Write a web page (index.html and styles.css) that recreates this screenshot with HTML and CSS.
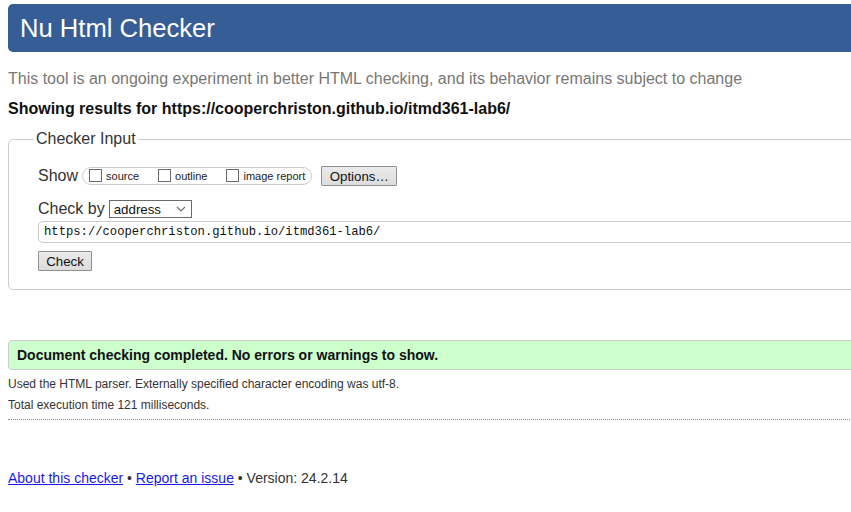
FILE: index.html
```html
<!DOCTYPE html>
<html lang="en">
<head>
<meta charset="utf-8">
<title>Nu Html Checker</title>
<link rel="stylesheet" href="styles.css">
</head>
<body>
<div class="page">
  <h1 class="title">Nu Html Checker</h1>
  <p class="intro">This tool is an ongoing experiment in better HTML checking, and its behavior remains subject to change</p>
  <p class="showing">Showing results for https://cooperchriston.github.io/itmd361-lab6/</p>

  <fieldset class="checker">
    <legend class="legend">Checker Input</legend>
    <div class="row show-row">
      <span class="label">Show</span>
      <span class="pill">
        <label class="opt"><input type="checkbox" class="cb">source</label>
        <label class="opt"><input type="checkbox" class="cb">outline</label>
        <label class="opt"><input type="checkbox" class="cb">image report</label>
      </span>
      <button class="btn btn-options" type="button">Options…</button>
    </div>
    <div class="row by-row">
      <span class="label">Check by</span>
      <span class="select">address
        <svg class="chev" width="10" height="6" viewBox="0 0 10 6"><path d="M1 1l4 4 4-4" fill="none" stroke="#6b6b6b" stroke-width="1.1"/></svg>
      </span>
    </div>
    <div class="url">https://cooperchriston.github.io/itmd361-lab6/</div>
    <div class="row">
      <button class="btn btn-check" type="button">Check</button>
    </div>
  </fieldset>

  <div class="success">Document checking completed. No errors or warnings to show.</div>
  <p class="details">Used the HTML parser. Externally specified character encoding was utf-8.</p>
  <p class="details">Total execution time 121 milliseconds.</p>
  <hr class="sep">

  <p class="footer"><a href="#" class="link">About this checker</a> • <a href="#" class="link">Report an issue</a> • Version: 24.2.14</p>
</div>
</body>
</html>
```
FILE: styles.css
```css
html, body {
  margin: 0;
  padding: 0;
  overflow: hidden;
  background: #fff;
}
body {
  font-family: "Liberation Sans", Arial, sans-serif;
  color: #222;
}
.page {
  width: 880px;
  padding: 4px 0 0 8px;
}
.title {
  margin: 0;
  height: 48px;
  box-sizing: border-box;
  background: #365d95;
  color: #fff;
  font-weight: normal;
  font-size: 25.6px;
  line-height: 48px;
  padding-left: 12px;
  border-radius: 5px;
}
.intro {
  margin: 17px 0 0;
  font-size: 16px;
  line-height: 20px;
  color: #777;
}
.showing {
  margin: 10px 0 0;
  font-size: 16px;
  line-height: 20px;
  font-weight: bold;
  color: #111;
}
.checker {
  margin: 11px 0 0;
  border: 1px solid #ccc;
  border-radius: 5px;
  padding: 17px 0 18px 29px;
  display: flex;
  flex-direction: column;
}
.legend {
  font-size: 16px;
  color: #333;
  padding: 0 2px;
  margin-left: -4px;
}
.row {
  display: flex;
  align-items: center;
}
.label {
  font-size: 16px;
  color: #333;
  margin-right: 4px;
}
.show-row {
  height: 22px;
}
.pill {
  display: flex;
  align-items: center;
  height: 18px;
  box-sizing: border-box;
  border: 1px solid #ccc;
  border-radius: 9px;
  padding: 0 6px 0 6px;
  margin-right: 9px;
}
.opt {
  display: flex;
  align-items: center;
  font-size: 11px;
  color: #222;
  margin-right: 19px;
}
.opt:last-child {
  margin-right: 0;
}
.cb {
  appearance: none;
  -webkit-appearance: none;
  width: 13px;
  height: 13px;
  margin: 0 4px 2px 0;
  border: 1px solid #6b6b6b;
  background: #fff;
  box-sizing: border-box;
}
.btn {
  font-family: "Liberation Sans", Arial, sans-serif;
  font-size: 13.3px;
  color: #111;
  background: linear-gradient(#eaeaea, #dcdcdc);
  border: 1px solid #8f8f8f;
  border-radius: 1px;
  height: 20px;
  padding: 0 7px;
  box-sizing: border-box;
}
.btn-options {
  width: 76px;
}
.btn-check {
  width: 54px;
  margin-top: 8px;
}
.by-row {
  margin-top: 12px;
  height: 20px;
}
.select {
  display: flex;
  align-items: center;
  justify-content: space-between;
  width: 83px;
  height: 18px;
  box-sizing: border-box;
  border: 1px solid #6b6b6b;
  padding: 0 5px 0 4px;
  font-size: 13.3px;
  color: #111;
}
.url {
  margin-top: 2px;
  height: 22px;
  box-sizing: border-box;
  border: 1px solid #ccc;
  border-radius: 5px;
  padding-left: 5px;
  font-family: "Liberation Mono", "DejaVu Sans Mono", monospace;
  font-size: 12.2px;
  line-height: 20px;
  color: #111;
}
.success {
  margin-top: 50px;
  height: 30px;
  box-sizing: border-box;
  background: #ccffcc;
  border: 1px solid #ccc;
  border-radius: 4px;
  padding-left: 8px;
  font-size: 14px;
  font-weight: bold;
  line-height: 28px;
  color: #111;
}
.details {
  margin: 6px 0 0;
  font-size: 12px;
  line-height: 16px;
  color: #333;
}
.details + .details {
  margin-top: 5px;
}
.sep {
  margin: 6px 0 0;
  border: 0;
  border-top: 1px dotted #888;
  height: 0;
}
.footer {
  margin: 49px 0 0;
  font-size: 14px;
  line-height: 18px;
  color: #333;
}
.link {
  color: #1a1ae6;
  text-decoration: underline;
}
```
